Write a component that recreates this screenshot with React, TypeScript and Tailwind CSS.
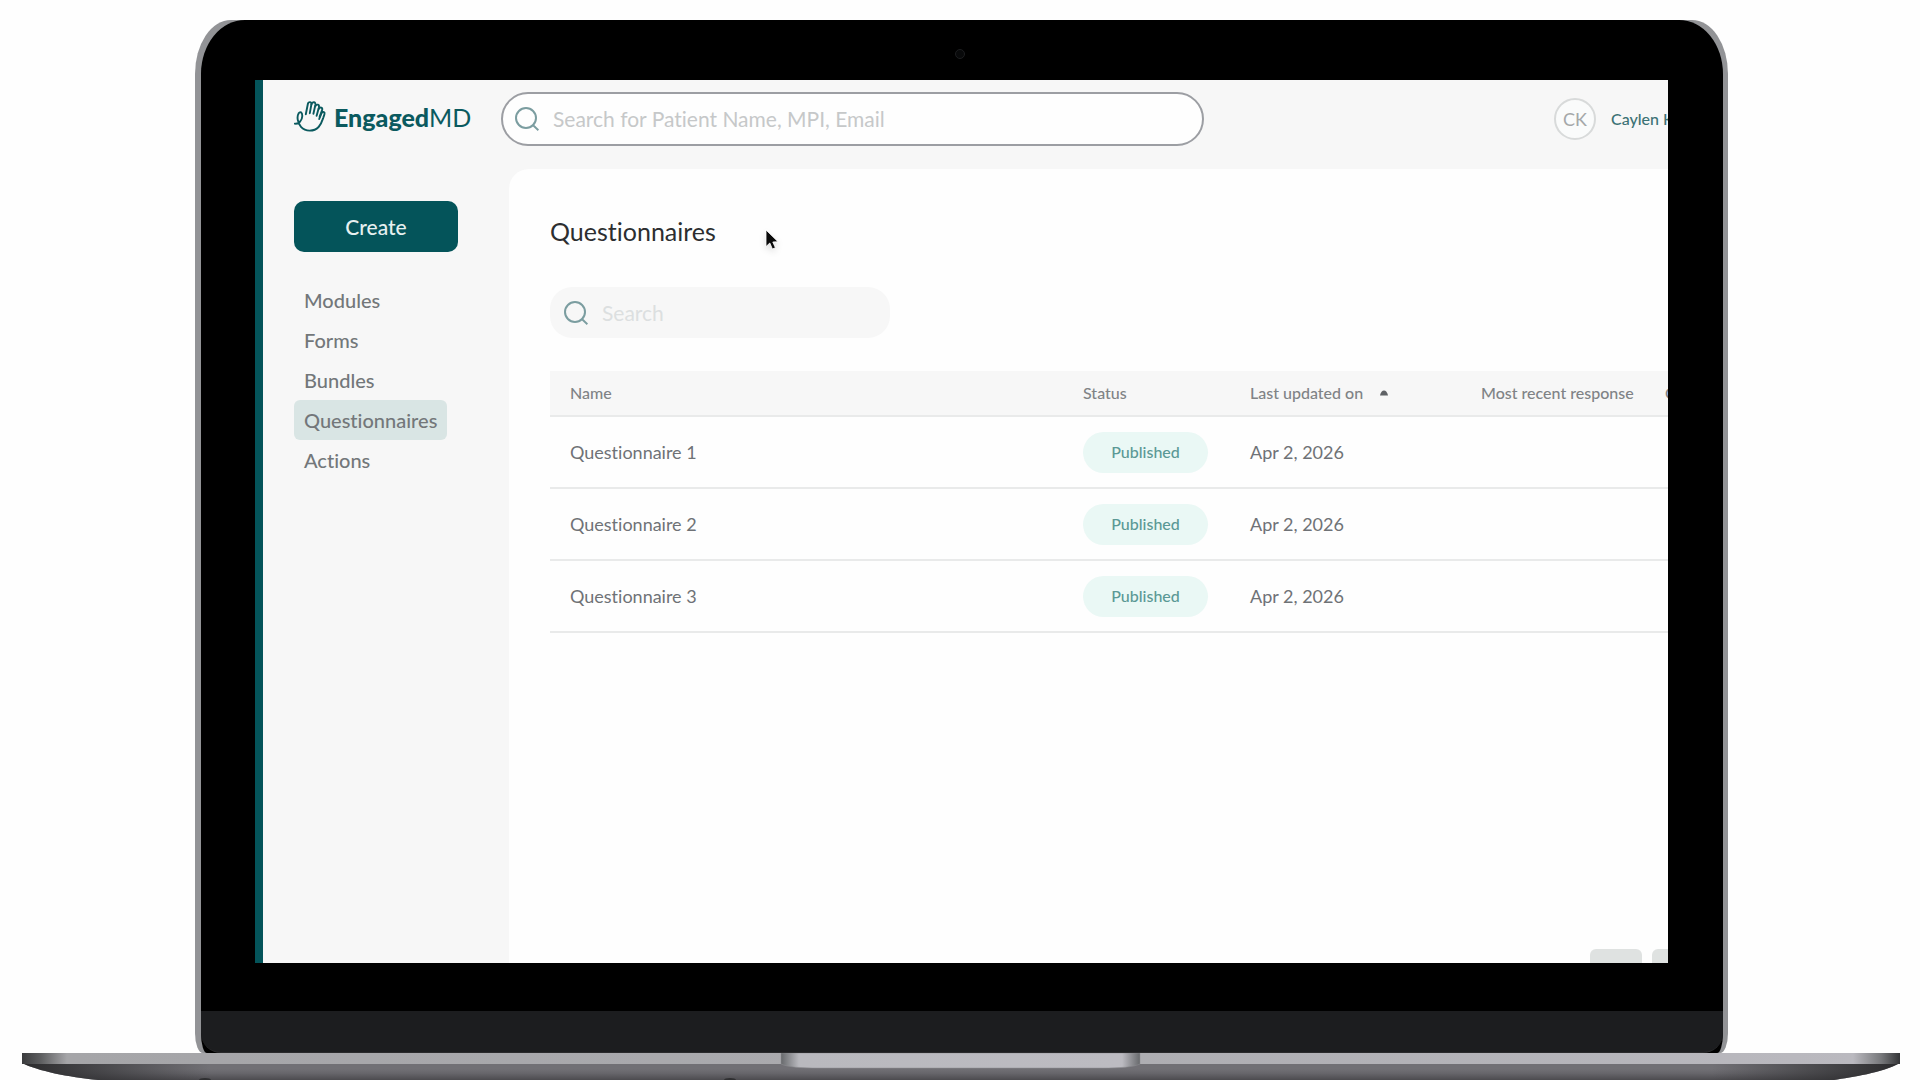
interface Questionnaire {
  name: string;
  status: string;
  updatedOn: string;
}

const navItems = ['Modules', 'Forms', 'Bundles', 'Questionnaires', 'Actions'];

const questionnaires: Questionnaire[] = [
  { name: 'Questionnaire 1', status: 'Published', updatedOn: 'Apr 2, 2026' },
  { name: 'Questionnaire 2', status: 'Published', updatedOn: 'Apr 2, 2026' },
  { name: 'Questionnaire 3', status: 'Published', updatedOn: 'Apr 2, 2026' },
];

const SearchIcon = () => (
  <svg viewBox="0 0 24 24" className="h-6 w-6 shrink-0" fill="none" stroke="#7b9da0" strokeWidth="2">
    <circle cx="11" cy="11" r="10" />
    <path d="M17.6 17.8 L23.4 23.2" />
  </svg>
);

const HandLogo = () => (
  <svg viewBox="0 0 32 32" className="h-8 w-8 shrink-0" fill="none" stroke="#0b5a5f" strokeWidth="1.9" strokeLinecap="round" strokeLinejoin="round">
    {/* Thumb loop and palm */}
    <path d="M0.8 22.6 C4.6 23.4 8.2 19.4 8.3 15 C8.3 11.2 6.2 10 4.6 12.4 C2.6 15.6 3.6 22 7 25.9 C11.4 30.8 20 30.8 24.6 26 C27.2 23.2 28 20.6 29.2 17 C30 14.4 31 12.6 30.4 11.6 C29.4 10.2 27.8 11 27.2 12.8 L25.2 18" />
    {/* Fingers */}
    <path d="M11.8 13.2 L13.8 3.2 C14.3 0.4 17.9 0.4 17.4 3.4 L15.8 12.2" />
    <path d="M17.4 3.4 C18.2 0.4 22 0.6 21.4 3.8 L19.4 12.8" />
    <path d="M21.4 5.2 C22.6 2.6 25.6 3.4 24.9 6.4 L22.6 14.8" />
    <path d="M24.6 8 C26.2 5.4 28.9 6.4 28.1 9.2 L25.6 15.8" />
  </svg>
);

const Cursor = () => (
  <svg viewBox="0 0 16 24" className="absolute top-[60px] left-[256px] h-6 w-4 drop-shadow-md">
    <path d="M1 1 L1 17.6 L4.8 14 L7.4 20 L10.4 18.7 L7.8 13 L13 12.7 Z" fill="#0a0a0a" stroke="#fff" strokeWidth="0.8" />
  </svg>
);

const Header = () => (
  <header className="flex h-[89px] items-start pt-3">
    <a href="#home" className="flex h-[50px] w-[238px] shrink-0 items-center gap-2 pl-[31px] text-[25px] leading-8 text-[#0b5a5f]">
      <HandLogo />
      <span className="flex">
        <span className="font-black">Engaged</span>
        <span>MD</span>
      </span>
    </a>
    <label className="flex h-[54px] w-1/2 shrink-0 items-center gap-[14px] rounded-full border-2 border-[#9c9ea3] bg-[#fefefe] pl-3">
      <SearchIcon />
      <input
        type="text"
        aria-label="Search patients"
        placeholder="Search for Patient Name, MPI, Email"
        className="w-full bg-transparent text-[21px] outline-none placeholder:text-[#c6c8c9]"
      />
    </label>
    <div className="ml-auto flex h-[54px] w-[114px] items-center gap-[15px] whitespace-nowrap">
      <div className="flex h-[42px] w-[42px] shrink-0 items-center justify-center rounded-full border-2 border-[#d8dada] bg-[#fafbfb] text-lg text-[#a5a8a9]">
        CK
      </div>
      <span className="text-base font-medium text-[#3c7275]">Caylen K</span>
    </div>
  </header>
);

const Sidebar = () => (
  <aside className="w-[246px] shrink-0 pt-8 pl-[31px]">
    <button className="h-[51px] w-[164px] rounded-[10px] bg-[#04545a] text-[21px] font-medium text-[#e6f0f0]">Create</button>
    <nav className="mt-7 flex flex-col items-start font-medium">
      {navItems.map((item) => (
        <a
          key={item}
          href={`#${item.toLowerCase()}`}
          className={`flex h-10 items-center rounded-md px-[10px] text-xl text-[#73777a] ${item === 'Questionnaires' ? 'bg-[#d9e5e4]' : ''}`}
        >
          {item}
        </a>
      ))}
    </nav>
  </aside>
);

const QuestionnaireTable = () => (
  <table className="mt-[33px] w-[1278px] table-fixed text-left text-lg text-[#6f7276]">
    <colgroup>
      <col />
      <col className="w-[167px]" />
      <col className="w-[231px]" />
      <col className="w-[184px]" />
      <col className="w-[184px]" />
    </colgroup>
    <thead>
      <tr className="h-[45px] border-b-2 border-[#e9eaea] bg-[#f7f7f7] text-base whitespace-nowrap text-[#808386]">
        <th className="pl-5 font-medium">Name</th>
        <th className="pl-[21px] font-medium">Status</th>
        <th className="pl-[21px] font-medium">
          <span className="flex items-center gap-4">
            Last updated on
            <svg viewBox="0 0 10 6" className="h-[6px] w-[10px]">
              <path d="M1 5.5 C1.4 2.6 3.4 0.6 5 0.6 C6.6 0.6 8.6 2.6 9 5.5 Z" fill="#5f6265" />
            </svg>
          </span>
        </th>
        <th className="pl-[21px] font-medium">Most recent response</th>
        <th className="pl-[21px] font-medium">Completed</th>
      </tr>
    </thead>
    <tbody>
      {questionnaires.map((q) => (
        <tr key={q.name} className="h-[72px] border-b-2 border-[#e9eaea]">
          <td className="pl-5">{q.name}</td>
          <td className="pl-[21px]">
            <span className="flex h-[41px] w-[125px] items-center justify-center rounded-full bg-[#eaf8f5] text-base font-medium text-[#5b9995]">
              {q.status}
            </span>
          </td>
          <td className="pl-[21px]">{q.updatedOn}</td>
          <td />
          <td />
        </tr>
      ))}
    </tbody>
  </table>
);

const AppScreen = () => (
  <div className="flex min-h-0 flex-1 flex-col overflow-hidden border-l-8 border-[#04545a] bg-[#f7f7f7]">
    <Header />
    <div className="flex min-h-0 flex-1">
      <Sidebar />
      <main className="relative flex min-w-0 flex-1 flex-col overflow-hidden rounded-tl-[20px] bg-[#fefefe] pt-[46px] pl-[41px]">
        <h1 className="text-[25px] leading-8 text-[#2c2e30]">Questionnaires</h1>
        <label className="mt-10 flex h-[51px] w-[340px] items-center gap-[14px] rounded-[22px] bg-[#f7f7f7] pl-[14px]">
          <SearchIcon />
          <input
            type="text"
            aria-label="Search questionnaires"
            placeholder="Search"
            className="w-full bg-transparent text-[21px] outline-none placeholder:text-[#dcdfe0]"
          />
        </label>
        <QuestionnaireTable />
        {/* Pagination */}
        <div className="mt-auto -mb-[26px] flex justify-end gap-[10px]">
          <button aria-label="Previous page" className="h-10 w-[52px] rounded-md bg-[#dfe2e1]" />
          <button aria-label="Next page" className="-mr-9 h-10 w-[52px] rounded-md bg-[#dfe2e1]" />
        </div>
        <Cursor />
      </main>
    </div>
  </div>
);

const LaptopBase = () => (
  <svg viewBox="0 0 1878 27" preserveAspectRatio="none" className="mr-5 ml-[22px] block h-[27px]">
    <defs>
      <linearGradient id="lip" x1="0" x2="1">
        <stop offset="0" stopColor="#3a3b3d" />
        <stop offset="0.01" stopColor="#5d5e60" />
        <stop offset="0.024" stopColor="#a5a5a8" />
        <stop offset="0.5" stopColor="#ababaf" />
        <stop offset="0.975" stopColor="#bab9bf" />
        <stop offset="0.99" stopColor="#77787b" />
        <stop offset="1" stopColor="#333436" />
      </linearGradient>
      <linearGradient id="under" x1="0" x2="0" y1="0" y2="1">
        <stop offset="0.35" stopColor="#717075" />
        <stop offset="0.6" stopColor="#67666b" />
        <stop offset="1" stopColor="#4c4b4f" />
      </linearGradient>
      <linearGradient id="underSides" x1="0" x2="1">
        <stop offset="0" stopColor="#2b2b2d" />
        <stop offset="0.1" stopColor="#2b2b2d" stopOpacity="0" />
        <stop offset="0.9" stopColor="#2b2b2d" stopOpacity="0" />
        <stop offset="1" stopColor="#2b2b2d" />
      </linearGradient>
      <linearGradient id="notch" x1="0" x2="1">
        <stop offset="0" stopColor="#67696c" />
        <stop offset="0.05" stopColor="#b9b9be" />
        <stop offset="0.95" stopColor="#bcbbc1" />
        <stop offset="1" stopColor="#67696c" />
      </linearGradient>
    </defs>
    <path d="M0 10 H1878 C1860 20 1830 24 1812 27 H76 C46 24 16 18 0 10 Z" fill="url(#under)" />
    <path d="M0 10 H1878 C1860 20 1830 24 1812 27 H76 C46 24 16 18 0 10 Z" fill="url(#underSides)" />
    <rect width="1878" height="11" fill="url(#lip)" />
    <path d="M759 0 H1118 V11 C1112 14 1098 15 1080 15 H797 C779 15 765 14 759 11 Z" fill="url(#notch)" stroke="#8f8f93" strokeWidth="0.5" />
    <ellipse cx="183" cy="27" rx="6" ry="2" fill="#2f2f31" />
    <ellipse cx="708" cy="27" rx="6" ry="2" fill="#2f2f31" />
  </svg>
);

export default function App() {
  return (
    <div className="flex h-screen flex-col overflow-hidden bg-[#fefefe] pt-5 font-['Lato',sans-serif] [font-variant-ligatures:none]">
      {/* Lid */}
      <div className="mr-48 ml-[195px] flex min-h-0 flex-1 flex-col rounded-t-[36px_54px] rounded-b-[8px_20px] bg-[#929396] pr-[5px] pl-[6px]">
        <div className="flex min-h-0 flex-1 flex-col rounded-t-[44px_54px] rounded-b-[6px_20px] bg-black">
          <div className="flex h-[60px] shrink-0 items-center justify-center pt-2 pr-1">
            <div className="h-[10px] w-[10px] rounded-full border border-[#1d1e20] bg-[#08090a]" />
          </div>
          <div className="mr-[55px] ml-[54px] flex min-h-0 flex-1 flex-col">
            <AppScreen />
          </div>
          <div className="mt-12 h-[42px] shrink-0 rounded-b-[20px] border-b border-[#2a2a2c] bg-[#1c1d1f]" />
        </div>
      </div>
      <LaptopBase />
    </div>
  );
}
